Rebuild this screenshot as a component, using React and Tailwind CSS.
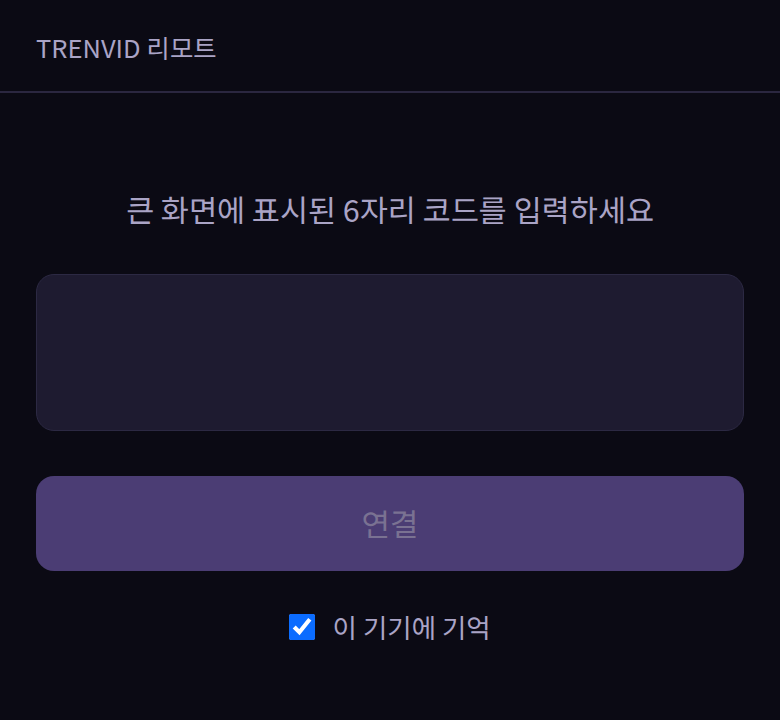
import React from "react";

export default function App() {
  const font = { fontFamily: '"Noto Sans KR", "Noto Sans CJK KR", "Noto Sans", sans-serif' };
  return (
    <div className="min-h-[720px] w-full bg-[#0b0a14] text-[#aaa4c6]" style={font}>
      <header className="h-[93px] border-b-2 border-[#2b2740] px-9 flex items-center">
        <span className="text-[25.5px] leading-none pt-[3px]">TRENVID 리모트</span>
      </header>
      <main className="px-9 flex flex-col">
        <h1 className="mt-[96px] text-center text-[30.5px] leading-[40px] text-[#aaa4c6] font-normal">
          큰 화면에 표시된 6자리 코드를 입력하세요
        </h1>
        <div className="mt-[45px] h-[157px] rounded-[18px] bg-[#1e1b30] border border-[#2c2943]" />
        <button className="mt-[45px] h-[95px] rounded-[18px] bg-[#4b3d74] text-[31px] text-[#7a7292]">
          연결
        </button>
        <label className="mt-[38px] h-9 flex items-center justify-center gap-[17px] text-[26.5px]">
          <input type="checkbox" defaultChecked className="w-[26px] h-[26px] accent-[#0b6cff]" />
          <span>이 기기에 기억</span>
        </label>
      </main>
    </div>
  );
}
